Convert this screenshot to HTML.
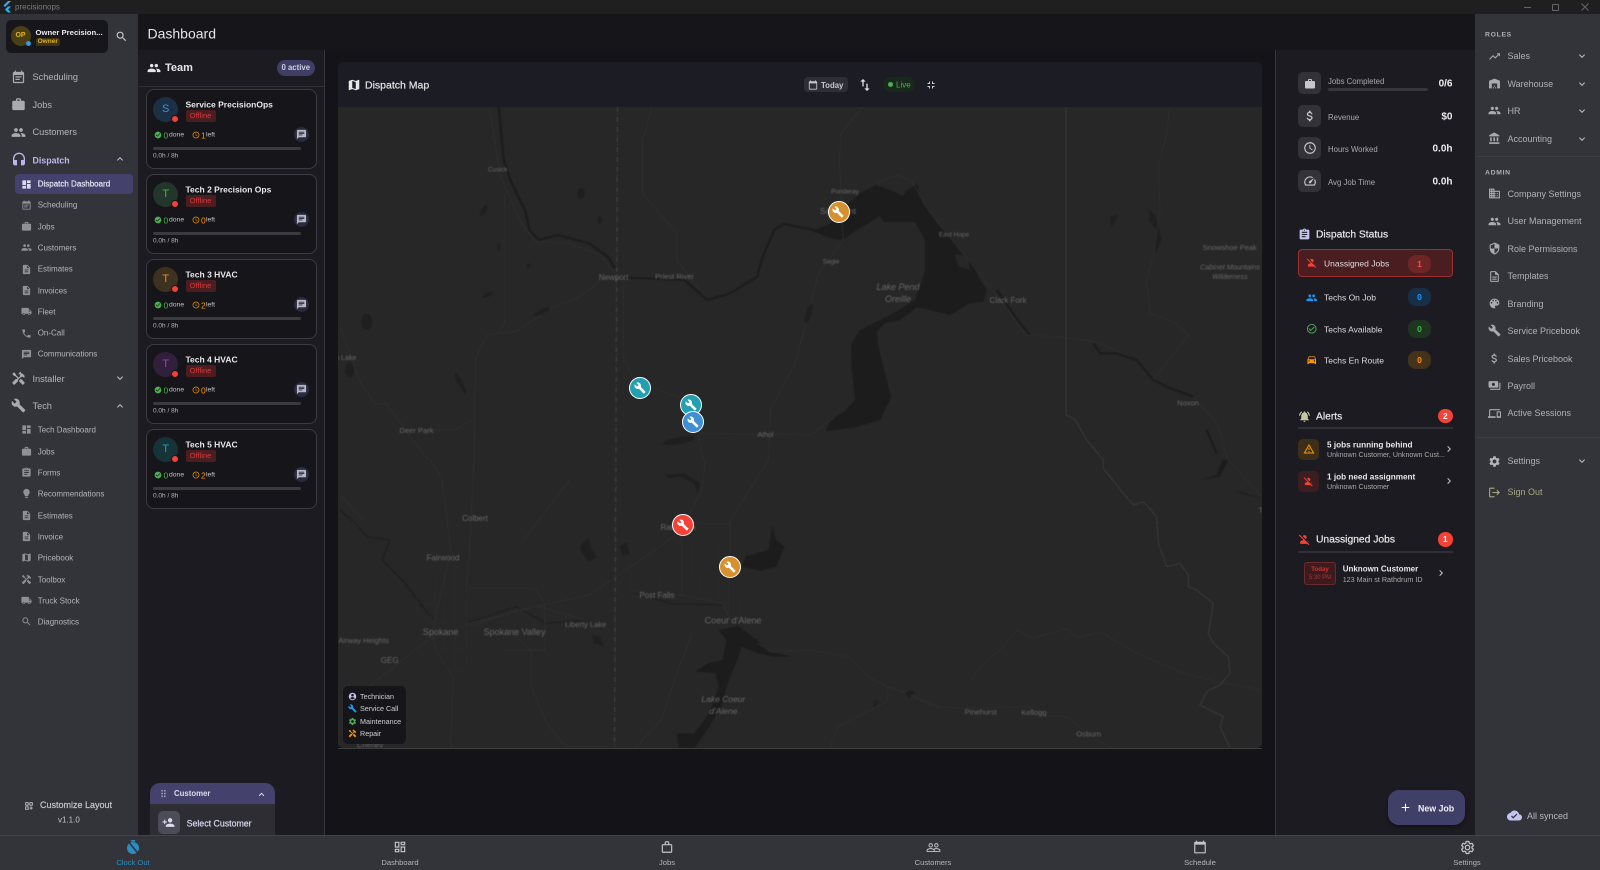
<!DOCTYPE html>
<html><head><meta charset="utf-8"><title>precisionops</title>
<style>
html,body{margin:0;padding:0;background:#131318}
body{width:1600px;height:870px;overflow:hidden;position:relative;font-family:"Liberation Sans",sans-serif;color:#ddd}
div,span.t{position:absolute}
.t{position:absolute;white-space:nowrap;transform:translateY(calc(-50% + .7px));line-height:1}
svg.i{position:absolute;fill:currentColor;display:block}
.s{font-size:9.2px;color:#b4b4ba}
.ss{font-size:8px;color:#b4b4ba}
.r{font-size:9px;color:#b0b0b6}
.nav{font-size:7.6px;color:#b4b4ba;transform:translate(-50%,-50%)}
.b{font-weight:bold}
.m{-webkit-text-stroke:.22px currentColor}
.card{width:171px;height:80px;left:145.5px;box-sizing:border-box;background:#15151a;border:1px solid #3b3b41;border-radius:8px}
.av{left:6.7px;top:7px;width:25px;height:25px;border-radius:50%;font-size:11px;text-align:center;line-height:25px}
.dot{left:24.5px;top:25.3px;width:6px;height:6px;border-radius:50%;background:#f44336;border:1px solid #15151a}
.chip{left:39px;top:20px;width:30px;height:12.4px;background:#4a1d20;border-radius:2px;color:#d9383a;font-size:7.6px;text-align:center;line-height:12.4px}
.bar{left:6.5px;top:57px;width:148px;height:3px;border-radius:2px;background:#3a3a40}
.cb{left:147.5px;top:37.5px;width:15px;height:15px;border-radius:50%;background:#2a2a42}
.pill{width:23px;height:18px;border-radius:8px;font-size:8.5px;font-weight:bold;text-align:center;line-height:18px;left:1408px}
.sq{left:1298px;width:22.7px;height:22px;border-radius:5px;background:#323238}
.badge{left:1438px;width:14.5px;height:14.5px;border-radius:50%;background:#f44336;color:#fff;font-size:8.5px;font-weight:bold;text-align:center;line-height:14.5px}
svg text{font-family:"Liberation Sans",sans-serif;fill:#686868;text-anchor:middle;font-size:7.6px}
.mapsvg{filter:blur(.45px)}
</style></head><body>
<svg width="0" height="0" style="position:absolute"><defs>
<symbol id="event" viewBox="0 0 24 24"><path d="M19 3h-1V1h-2v2H8V1H6v2H5c-1.11 0-1.99.9-1.99 2L3 19c0 1.1.89 2 2 2h14c1.1 0 2-.9 2-2V5c0-1.1-.9-2-2-2zm0 16H5V8h14v11zM7 10h10v2H7zm0 4h7v2H7z"/></symbol>
<symbol id="work" viewBox="0 0 24 24"><path d="M20 6h-4V4c0-1.11-.89-2-2-2h-4c-1.11 0-2 .89-2 2v2H4c-1.11 0-1.99.89-1.99 2L2 19c0 1.11.89 2 2 2h16c1.11 0 2-.89 2-2V8c0-1.11-.89-2-2-2zm-6 0h-4V4h4v2z"/></symbol>
<symbol id="people" viewBox="0 0 24 24"><path d="M16 11c1.66 0 2.99-1.34 2.99-3S17.66 5 16 5c-1.66 0-3 1.34-3 3s1.34 3 3 3zm-8 0c1.66 0 2.99-1.34 2.99-3S9.66 5 8 5C6.34 5 5 6.34 5 8s1.34 3 3 3zm0 2c-2.33 0-7 1.17-7 3.5V19h14v-2.5c0-2.33-4.67-3.5-7-3.5zm8 0c-.29 0-.62.02-.97.05 1.16.84 1.97 1.97 1.97 3.45V19h6v-2.5c0-2.33-4.67-3.5-7-3.5z"/></symbol>
<symbol id="headset" viewBox="0 0 24 24"><path d="M12 1c-4.97 0-9 4.03-9 9v7c0 1.66 1.34 3 3 3h3v-8H5v-2c0-3.87 3.13-7 7-7s7 3.13 7 7v2h-4v8h3c1.66 0 3-1.34 3-3v-7c0-4.97-4.03-9-9-9z"/></symbol>
<symbol id="dash" viewBox="0 0 24 24"><path d="M3 13h8V3H3v10zm0 8h8v-6H3v6zm10 0h8V11h-8v10zm0-18v6h8V3h-8z"/></symbol>
<symbol id="doc" viewBox="0 0 24 24"><path d="M14 2H6c-1.1 0-1.99.9-1.99 2L4 20c0 1.1.89 2 1.99 2H18c1.1 0 2-.9 2-2V8l-6-6zm2 16H8v-2h8v2zm0-4H8v-2h8v2zm-3-5V3.5L18.5 9H13z"/></symbol>
<symbol id="truck" viewBox="0 0 24 24"><path d="M20 8h-3V4H3c-1.1 0-2 .9-2 2v11h2c0 1.66 1.34 3 3 3s3-1.34 3-3h6c0 1.66 1.34 3 3 3s3-1.34 3-3h2v-5l-3-4zM6 18.5c-.83 0-1.5-.67-1.5-1.5s.67-1.5 1.5-1.5 1.5.67 1.5 1.5-.67 1.5-1.5 1.5zm13.5-9l1.96 2.5H17V9.5h2.5zm-1.5 9c-.83 0-1.5-.67-1.5-1.5s.67-1.5 1.5-1.5 1.5.67 1.5 1.5-.67 1.5-1.5 1.5z"/></symbol>
<symbol id="phone" viewBox="0 0 24 24"><path d="M6.62 10.79c1.44 2.83 3.76 5.14 6.59 6.59l2.2-2.2c.27-.27.67-.36 1.02-.24 1.12.37 2.33.57 3.57.57.55 0 1 .45 1 1V20c0 .55-.45 1-1 1-9.39 0-17-7.61-17-17 0-.55.45-1 1-1h3.5c.55 0 1 .45 1 1 0 1.25.2 2.45.57 3.57.11.35.03.74-.25 1.02l-2.2 2.2z"/></symbol>
<symbol id="chat" viewBox="0 0 24 24"><path d="M20 2H4c-1.1 0-1.99.9-1.99 2L2 22l4-4h14c1.1 0 2-.9 2-2V4c0-1.1-.9-2-2-2zM6 9h12v2H6V9zm8 5H6v-2h8v2zm4-6H6V6h12v2z"/></symbol>
<symbol id="build" viewBox="0 0 24 24"><path d="M22.7 19l-9.1-9.1c.9-2.3.4-5-1.5-6.9-2-2-5-2.4-7.4-1.3L9 6 6 9 1.6 4.7C.4 7.1.9 10.1 2.9 12.1c1.9 1.9 4.6 2.4 6.9 1.5l9.1 9.1c.4.4 1 .4 1.4 0l2.3-2.3c.5-.4.5-1.1.1-1.4z"/></symbol>
<symbol id="handy" viewBox="0 0 24 24"><path d="M21.67 18.17l-5.3-5.3h-.99l-2.54 2.54v.99l5.3 5.3c.39.39 1.02.39 1.41 0l2.12-2.12c.39-.38.39-1.02 0-1.41zM17.34 10.19l1.41-1.41 2.12 2.12c1.17-1.17 1.17-3.07 0-4.24l-3.54-3.54-1.41 1.41V1.71l-.7-.71-3.54 3.54.71.71h2.83l-1.41 1.41 1.06 1.06-2.89 2.89-4.13-4.13V5.06L4.83 2.04 2 4.87 5.03 7.9h1.41l4.13 4.13-.85.85H7.6l-5.3 5.3c-.39.39-.39 1.02 0 1.41l2.12 2.12c.39.39 1.02.39 1.41 0l5.3-5.3v-2.12l5.15-5.15 1.06 1.05z"/></symbol>
<symbol id="bulb" viewBox="0 0 24 24"><path d="M9 21c0 .55.45 1 1 1h4c.55 0 1-.45 1-1v-1H9v1zm3-19C8.14 2 5 5.14 5 9c0 2.38 1.19 4.47 3 5.74V17c0 .55.45 1 1 1h6c.55 0 1-.45 1-1v-2.26c1.81-1.27 3-3.36 3-5.74 0-3.86-3.14-7-7-7z"/></symbol>
<symbol id="search" viewBox="0 0 24 24"><path d="M15.5 14h-.79l-.28-.27C15.41 12.59 16 11.11 16 9.5 16 5.91 13.09 3 9.5 3S3 5.91 3 9.5 5.91 16 9.5 16c1.61 0 3.09-.59 4.23-1.57l.27.28v.79l5 4.99L20.49 19l-4.99-5zm-6 0C7.01 14 5 11.99 5 9.5S7.01 5 9.5 5 14 7.01 14 9.5 11.99 14 9.5 14z"/></symbol>
<symbol id="more" viewBox="0 0 24 24"><path d="M16.59 8.59L12 13.17 7.41 8.59 6 10l6 6 6-6z"/></symbol>
<symbol id="less" viewBox="0 0 24 24"><path d="M12 8l-6 6 1.41 1.41L12 10.83l4.59 4.58L18 14z"/></symbol>
<symbol id="right" viewBox="0 0 24 24"><path d="M10 6L8.59 7.41 13.17 12l-4.58 4.59L10 18l6-6z"/></symbol>
<symbol id="check" viewBox="0 0 24 24"><path d="M12 2C6.48 2 2 6.48 2 12s4.48 10 10 10 10-4.48 10-10S17.52 2 12 2zm-2 15l-5-5 1.41-1.41L10 14.17l7.59-7.59L19 8l-9 9z"/></symbol>
<symbol id="checko" viewBox="0 0 24 24"><path d="M16.59 7.58L10 14.17l-3.59-3.58L5 12l5 5 8-8zM12 2C6.48 2 2 6.48 2 12s4.48 10 10 10 10-4.48 10-10S17.52 2 12 2zm0 18c-4.42 0-8-3.58-8-8s3.58-8 8-8 8 3.58 8 8-3.58 8-8 8z"/></symbol>
<symbol id="clock" viewBox="0 0 24 24"><path d="M11.99 2C6.47 2 2 6.48 2 12s4.47 10 9.99 10C17.52 22 22 17.52 22 12S17.52 2 11.99 2zM12 20c-4.42 0-8-3.58-8-8s3.58-8 8-8 8 3.58 8 8-3.58 8-8 8zm.5-13H11v6l5.25 3.15.75-1.23-4.5-2.67z"/></symbol>
<symbol id="map" viewBox="0 0 24 24"><path d="M20.5 3l-.16.03L15 5.1 9 3 3.36 4.9c-.21.07-.36.25-.36.48V20.5c0 .28.22.5.5.5l.16-.03L9 18.9l6 2.1 5.64-1.9c.21-.07.36-.25.36-.48V3.5c0-.28-.22-.5-.5-.5zM15 19l-6-2.11V5l6 2.11V19z"/></symbol>
<symbol id="swap" viewBox="0 0 24 24"><path d="M16 17.01V10h-2v7.01h-3L15 21l4-3.99h-3zM9 3L5 6.99h3V14h2V6.99h3L9 3z"/></symbol>
<symbol id="fsx" viewBox="0 0 24 24"><path d="M5 16h3v3h2v-5H5v2zm3-8H5v2h5V5H8v3zm6 11h2v-3h3v-2h-5v5zm2-11V5h-2v5h5V8h-3z"/></symbol>
<symbol id="cal" viewBox="0 0 24 24"><path d="M20 3h-1V1h-2v2H7V1H5v2H4c-1.1 0-2 .9-2 2v16c0 1.1.9 2 2 2h16c1.1 0 2-.9 2-2V5c0-1.1-.9-2-2-2zm0 18H4V8h16v13z"/></symbol>
<symbol id="money" viewBox="0 0 24 24"><path d="M11.8 10.9c-2.27-.59-3-1.2-3-2.15 0-1.09 1.01-1.85 2.7-1.85 1.78 0 2.44.85 2.5 2.1h2.21c-.07-1.72-1.12-3.3-3.21-3.81V3h-3v2.16c-1.94.42-3.5 1.68-3.5 3.61 0 2.31 1.91 3.46 4.7 4.13 2.5.6 3 1.48 3 2.41 0 .69-.49 1.79-2.7 1.79-2.06 0-2.87-.92-2.98-2.1h-2.2c.12 2.19 1.76 3.42 3.68 3.83V21h3v-2.15c1.95-.37 3.5-1.5 3.5-3.55 0-2.84-2.43-3.81-4.7-4.4z"/></symbol>
<symbol id="speed" viewBox="0 0 24 24"><path d="M20.38 8.57l-1.23 1.85a8 8 0 0 1-.22 7.58H5.07A8 8 0 0 1 15.58 6.85l1.85-1.23A10 10 0 0 0 3.35 19a2 2 0 0 0 1.72 1h13.85a2 2 0 0 0 1.74-1 10 10 0 0 0-.27-10.44zM10.59 15.41a2 2 0 0 0 2.83 0l5.66-8.49-8.49 5.66a2 2 0 0 0 0 2.83z"/></symbol>
<symbol id="assign" viewBox="0 0 24 24"><path d="M19 3h-4.18C14.4 1.84 13.3 1 12 1c-1.3 0-2.4.84-2.82 2H5c-1.1 0-2 .9-2 2v14c0 1.1.9 2 2 2h14c1.1 0 2-.9 2-2V5c0-1.1-.9-2-2-2zm-7 0c.55 0 1 .45 1 1s-.45 1-1 1-1-.45-1-1 .45-1 1-1zm2 14H7v-2h7v2zm3-4H7v-2h10v2zm0-4H7V7h10v2z"/></symbol>
<symbol id="poff" viewBox="0 0 24 24"><path d="M8.65 5.82C9.36 4.72 10.6 4 12 4c2.21 0 4 1.79 4 4 0 1.4-.72 2.64-1.82 3.35L8.65 5.82zM20 17.17c-.02-1.1-.63-2.11-1.61-2.62-.54-.28-1.13-.54-1.77-.76L20 17.17zm1.19 4.02L2.81 2.81 1.39 4.22l8.89 8.89c-1.81.23-3.39.79-4.67 1.45C4.61 15.07 4 16.1 4 17.22V20h13.17l2.61 2.61 1.41-1.42z"/></symbol>
<symbol id="warn" viewBox="0 0 24 24"><path d="M12 5.99L19.53 19H4.47L12 5.99M12 2L1 21h22L12 2zm1 14h-2v2h2v-2zm0-6h-2v4h2v-4z"/></symbol>
<symbol id="bell" viewBox="0 0 24 24"><path d="M7.58 4.08L6.15 2.65C3.75 4.48 2.17 7.3 2.03 10.5h2c.15-2.65 1.51-4.97 3.55-6.42zm12.39 6.42h2c-.15-3.2-1.73-6.02-4.12-7.85l-1.42 1.43c2.02 1.45 3.39 3.77 3.54 6.42zM18 11c0-3.07-1.64-5.64-4.5-6.32V4c0-.83-.67-1.5-1.5-1.5s-1.5.67-1.5 1.5v.68C7.63 5.36 6 7.92 6 11v5l-2 2v1h16v-1l-2-2v-5zm-6 11c.14 0 .27-.01.4-.04.65-.14 1.18-.58 1.44-1.18.1-.24.15-.5.15-.78h-4c.01 1.1.9 2 2.01 2z"/></symbol>
<symbol id="car" viewBox="0 0 24 24"><path d="M18.92 6.01C18.72 5.42 18.16 5 17.5 5h-11c-.66 0-1.21.42-1.42 1.01L3 12v8c0 .55.45 1 1 1h1c.55 0 1-.45 1-1v-1h12v1c0 .55.45 1 1 1h1c.55 0 1-.45 1-1v-8l-2.08-5.99zM6.5 16c-.83 0-1.5-.67-1.5-1.5S5.67 13 6.5 13s1.5.67 1.5 1.5S7.33 16 6.5 16zm11 0c-.83 0-1.5-.67-1.5-1.5s.67-1.5 1.5-1.5 1.5.67 1.5 1.5-.67 1.5-1.5 1.5zM5 11l1.5-4.5h11L19 11H5z"/></symbol>
<symbol id="trend" viewBox="0 0 24 24"><path d="M16 6l2.29 2.29-4.88 4.88-4-4L2 16.59 3.41 18l6-6 4 4 6.3-6.29L22 12V6z"/></symbol>
<symbol id="ware" viewBox="0 0 24 24"><path d="M22 21V7L12 3 2 7v14h5v-9h10v9h5zm-11-2H9v2h2v-2zm2-3h-2v2h2v-2zm2 3h-2v2h2v-2z"/></symbol>
<symbol id="bank" viewBox="0 0 24 24"><path d="M4 10v7h3v-7H4zm6 0v7h3v-7h-3zM2 22h19v-3H2v3zm14-12v7h3v-7h-3zm-4.5-9L2 6v2h19V6l-9.5-5z"/></symbol>
<symbol id="biz" viewBox="0 0 24 24"><path d="M12 7V3H2v18h20V7H12zM6 19H4v-2h2v2zm0-4H4v-2h2v2zm0-4H4V9h2v2zm0-4H4V5h2v2zm4 12H8v-2h2v2zm0-4H8v-2h2v2zm0-4H8V9h2v2zm0-4H8V5h2v2zm10 12h-8v-2h2v-2h-2v-2h2v-2h-2V9h8v10zm-2-8h-2v2h2v-2zm0 4h-2v2h2v-2z"/></symbol>
<symbol id="shield" viewBox="0 0 24 24"><path d="M12 1L3 5v6c0 5.55 3.84 10.74 9 12 5.16-1.26 9-6.45 9-12V5l-9-4zm0 10.99h7c-.53 4.12-3.28 7.79-7 8.94V12H5V6.3l7-3.11v8.8z"/></symbol>
<symbol id="doco" viewBox="0 0 24 24"><path d="M8 16h8v2H8zm0-4h8v2H8zm6-10H6c-1.1 0-2 .9-2 2v16c0 1.1.89 2 1.99 2H18c1.1 0 2-.9 2-2V8l-6-6zm4 18H6V4h7v5h5v11z"/></symbol>
<symbol id="pal" viewBox="0 0 24 24"><path d="M12 3c-4.97 0-9 4.03-9 9s4.03 9 9 9c.83 0 1.5-.67 1.5-1.5 0-.39-.15-.74-.39-1.01-.23-.26-.38-.61-.38-.99 0-.83.67-1.5 1.5-1.5H16c2.76 0 5-2.24 5-5 0-4.42-4.03-8-9-8zm-5.5 9c-.83 0-1.5-.67-1.5-1.5S5.67 9 6.5 9 8 9.67 8 10.5 7.33 12 6.5 12zm3-4C8.67 8 8 7.33 8 6.5S8.67 5 9.5 5s1.5.67 1.5 1.5S10.33 8 9.5 8zm5 0c-.83 0-1.5-.67-1.5-1.5S13.67 5 14.5 5s1.5.67 1.5 1.5S15.33 8 14.5 8zm3 4c-.83 0-1.5-.67-1.5-1.5S16.67 9 17.5 9s1.5.67 1.5 1.5-.67 1.5-1.5 1.5z"/></symbol>
<symbol id="pay" viewBox="0 0 24 24"><path d="M19 14V6c0-1.1-.9-2-2-2H3c-1.1 0-2 .9-2 2v8c0 1.1.9 2 2 2h14c1.1 0 2-.9 2-2zm-9-1c-1.66 0-3-1.34-3-3s1.34-3 3-3 3 1.34 3 3-1.34 3-3 3zm13-6v11c0 1.1-.9 2-2 2H4v-2h17V7h2z"/></symbol>
<symbol id="dev" viewBox="0 0 24 24"><path d="M4 6h18V4H4c-1.1 0-2 .9-2 2v11H0v3h14v-3H4V6zm19 2h-6c-.55 0-1 .45-1 1v10c0 .55.45 1 1 1h6c.55 0 1-.45 1-1V9c0-.55-.45-1-1-1zm-1 9h-4v-7h4v7z"/></symbol>
<symbol id="gear" viewBox="0 0 24 24"><path d="M19.14 12.94c.04-.3.06-.61.06-.94 0-.32-.02-.64-.07-.94l2.03-1.58c.18-.14.23-.41.12-.61l-1.92-3.32c-.12-.22-.37-.29-.59-.22l-2.39.96c-.5-.38-1.03-.7-1.62-.94l-.36-2.54c-.04-.24-.24-.41-.48-.41h-3.84c-.24 0-.43.17-.47.41l-.36 2.54c-.59.24-1.13.57-1.62.94l-2.39-.96c-.22-.08-.47 0-.59.22L2.74 8.87c-.12.21-.08.47.12.61l2.03 1.58c-.05.3-.09.63-.09.94s.02.64.07.94l-2.03 1.58c-.18.14-.23.41-.12.61l1.92 3.32c.12.22.37.29.59.22l2.39-.96c.5.38 1.03.7 1.62.94l.36 2.54c.05.24.24.41.48.41h3.84c.24 0 .44-.17.47-.41l.36-2.54c.59-.24 1.13-.56 1.62-.94l2.39.96c.22.08.47 0 .59-.22l1.92-3.32c.12-.22.07-.47-.12-.61l-2.01-1.58zM12 15.6c-1.98 0-3.6-1.62-3.6-3.6s1.62-3.6 3.6-3.6 3.6 1.62 3.6 3.6-1.62 3.6-3.6 3.6z"/></symbol>
<symbol id="out" viewBox="0 0 24 24"><path d="M17 7l-1.41 1.41L18.17 11H8v2h10.17l-2.58 2.58L17 17l5-5zM4 5h8V3H4c-1.1 0-2 .9-2 2v14c0 1.1.9 2 2 2h8v-2H4V5z"/></symbol>
<symbol id="add" viewBox="0 0 24 24"><path d="M19 13h-6v6h-2v-6H5v-2h6V5h2v6h6v2z"/></symbol>
<symbol id="cloud" viewBox="0 0 24 24"><path d="M19.35 10.04C18.67 6.59 15.64 4 12 4 9.11 4 6.6 5.64 5.35 8.04 2.34 8.36 0 10.91 0 14c0 3.31 2.69 6 6 6h13c2.76 0 5-2.24 5-5 0-2.64-2.05-4.78-4.65-4.96zM10 17l-3.5-3.5 1.41-1.41L10 14.17 15.18 9l1.41 1.41L10 17z"/></symbol>
<symbol id="padd" viewBox="0 0 24 24"><path d="M15 12c2.21 0 4-1.79 4-4s-1.79-4-4-4-4 1.79-4 4 1.79 4 4 4zm-9-2V7H4v3H1v2h3v3h2v-3h3v-2H6zm9 4c-2.67 0-8 1.34-8 4v2h16v-2c0-2.66-5.33-4-8-4z"/></symbol>
<symbol id="drag" viewBox="0 0 24 24"><path d="M11 18c0 1.1-.9 2-2 2s-2-.9-2-2 .9-2 2-2 2 .9 2 2zm-2-8c-1.1 0-2 .9-2 2s.9 2 2 2 2-.9 2-2-.9-2-2-2zm0-6c-1.1 0-2 .9-2 2s.9 2 2 2 2-.9 2-2-.9-2-2-2zm6 4c1.1 0 2-.9 2-2s-.9-2-2-2-2 .9-2 2 .9 2 2 2zm0 2c-1.1 0-2 .9-2 2s.9 2 2 2 2-.9 2-2-.9-2-2-2zm0 6c-1.1 0-2 .9-2 2s.9 2 2 2 2-.9 2-2-.9-2-2-2z"/></symbol>
<symbol id="cust" viewBox="0 0 24 24"><path d="M3 3h8v8H3zm2 2v4h4V5zm8-2h8v8h-8zm2 2v4h4V5zM3 13h8v8H3zm2 2v4h4v-4zm13-2h-2v3h-3v2h3v3h2v-3h3v-2h-3z"/></symbol>
<symbol id="dasho" viewBox="0 0 24 24"><path d="M19 5v2h-4V5h4M9 5v6H5V5h4m10 8v6h-4v-6h4M9 17v2H5v-2h4M21 3h-8v6h8V3zM11 3H3v10h8V3zm10 8h-8v10h8V11zm-10 4H3v6h8v-6z"/></symbol>
<symbol id="bag" viewBox="0 0 24 24"><path d="M19 7h-3V5c0-1.7-1.3-3-3-3h-2C9.300 2 8 3.300 8 5v2H5c-1.100 0-2 .9-2 2v11c0 1.100.9 2 2 2h14c1.100 0 2-.9 2-2V9c0-1.100-.9-2-2-2zM10 5c0-.6.4-1 1-1h2c.6 0 1 .4 1 1v2h-4V5zm9 15H5V9h14v11z"/></symbol>
<symbol id="pplo" viewBox="0 0 24 24"><path d="M16.500 13c-1.200 0-3.070.34-4.500 1-1.430-.67-3.300-1-4.500-1C5.330 13 1 14.080 1 16.250V19h22v-2.750c0-2.170-4.330-3.250-6.500-3.250zm-4 4.500h-10v-1.250c0-.54 2.560-1.750 5-1.750s5 1.210 5 1.750v1.250zm9 0H14v-1.250c0-.46-.2-.86-.52-1.220.88-.3 1.960-.53 3.020-.53 2.440 0 5 1.210 5 1.750v1.250zM7.500 12c1.930 0 3.500-1.570 3.500-3.500S9.430 5 7.500 5 4 6.570 4 8.500 5.570 12 7.500 12zm0-5.500c1.100 0 2 .9 2 2s-.9 2-2 2-2-.9-2-2 .9-2 2-2zm9 5.500c1.930 0 3.500-1.570 3.500-3.500S18.430 5 16.500 5 13 6.570 13 8.500s1.570 3.500 3.500 3.500zm0-5.500c1.100 0 2 .9 2 2s-.9 2-2 2-2-.9-2-2 .9-2 2-2z"/></symbol>
<symbol id="acct" viewBox="0 0 24 24"><path d="M12 2a10 10 0 100 20 10 10 0 000-20zm0 3a3.500 3.500 0 110 7 3.500 3.500 0 010-7zm0 14.500c-2.600 0-4.900-1.300-6.200-3.300 1.100-1.700 4-2.700 6.200-2.700s5.100 1 6.200 2.700c-1.300 2-3.600 3.300-6.200 3.300z"/></symbol>
</defs></svg>

<!-- Title bar -->
<div style="left:0;top:0;width:1600px;height:14px;background:#1f1f1f"></div>
<svg style="position:absolute;left:2px;top:1px" width="9" height="12" viewBox="0 0 9 12"><path d="M6 0h3L3 6 1.500 4.500z" fill="#42a5f5"/><path d="M6 5.500h3L6 8.500l3 3H6L3 8.500z" fill="#29b6f6"/></svg>
<span class="t" style="left:15px;top:7px;font-size:8px;color:#7a7a7a">precisionops</span>
<div style="left:1524px;top:7px;width:7px;height:1px;background:#666"></div>
<div style="left:1552px;top:3.500px;width:5px;height:5px;border:1px solid #666;border-radius:1px"></div>
<svg style="position:absolute;left:1581px;top:3px" width="8" height="8"><path d="M.5.5l7 7m0-7l-7 7" stroke="#666" fill="none"/></svg>

<!-- Base regions -->
<div style="left:138px;top:14px;width:1337px;height:36px;background:#15151a"></div>
<div style="left:138px;top:50px;width:186px;height:785px;background:#1b1b21"></div>
<div style="left:324px;top:50px;width:1px;height:785px;background:#36363b"></div>
<div style="left:1275px;top:50px;width:200px;height:785px;background:#1b1b21;border-left:1px solid #36363b;box-sizing:border-box"></div>
<div style="left:0;top:14px;width:138px;height:821px;background:#33333a"></div>
<div style="left:1475px;top:14px;width:125px;height:821px;background:#33333a"></div>
<div style="left:138px;top:85.500px;width:186px;height:1.500px;background:#2e2e34"></div>
<span class="t" style="left:147.500px;top:32.500px;font-size:14px;color:#e6e6e8">Dashboard</span>

<!-- Left sidebar -->
<div style="left:5.500px;top:20px;width:102px;height:33px;background:#16161b;border-radius:5px"></div>
<div style="left:10.500px;top:26px;width:20px;height:20px;background:#4a3e16;border-radius:50%;color:#e2b21f;font-size:7px;font-weight:bold;text-align:center;line-height:20px">OP</div>
<div style="left:25.500px;top:41px;width:5px;height:5px;border-radius:50%;background:#3a9ad9"></div>
<span class="t b" style="left:35.500px;top:32px;font-size:7.700px;color:#e8e8ea">Owner Precision...</span>
<div style="left:35.500px;top:37.500px;width:24.500px;height:8px;border-radius:2px;background:#3c3314;color:#e2b21f;font-size:6.500px;text-align:center;line-height:8px;font-weight:bold">Owner</div>
<svg class="i" style="left:114.500px;top:29.500px;width:13px;height:13px;color:#ccc"><use href="#search"/></svg>

<svg class="i" style="left:11px;top:69.500px;width:15px;height:15px;color:#aaaab0"><use href="#event"/></svg><span class="t s" style="left:32.500px;top:77px">Scheduling</span>
<svg class="i" style="left:11px;top:97px;width:15px;height:15px;color:#aaaab0"><use href="#work"/></svg><span class="t s" style="left:32.500px;top:105px">Jobs</span>
<svg class="i" style="left:11px;top:124.500px;width:15px;height:15px;color:#aaaab0"><use href="#people"/></svg><span class="t s" style="left:32.500px;top:132px">Customers</span>
<svg class="i" style="left:10.500px;top:151.500px;width:16px;height:16px;color:#b9b8ee"><use href="#headset"/></svg><span class="t s b" style="left:32.500px;top:160px;color:#b9b8ee;font-size:8.800px">Dispatch</span>
<svg class="i" style="left:113.500px;top:153px;width:12px;height:12px;color:#c8c8cc"><use href="#less"/></svg>
<div style="left:15px;top:174px;width:118px;height:20px;background:#44426c;border-radius:4px"></div>
<svg class="i" style="left:20.500px;top:178.500px;width:11px;height:11px;color:#dcdcf0"><use href="#dash"/></svg><span class="t ss m" style="left:37.700px;top:184px;color:#e2e2f0">Dispatch Dashboard</span>
<svg class="i" style="left:20.500px;top:199.500px;width:11px;height:11px;color:#909096"><use href="#event"/></svg><span class="t ss" style="left:37.700px;top:205.300px">Scheduling</span>
<svg class="i" style="left:20.500px;top:221px;width:11px;height:11px;color:#909096"><use href="#work"/></svg><span class="t ss" style="left:37.700px;top:226.700px">Jobs</span>
<svg class="i" style="left:20.500px;top:242px;width:11px;height:11px;color:#909096"><use href="#people"/></svg><span class="t ss" style="left:37.700px;top:248px">Customers</span>
<svg class="i" style="left:20.500px;top:263.500px;width:11px;height:11px;color:#909096"><use href="#doc"/></svg><span class="t ss" style="left:37.700px;top:269.300px">Estimates</span>
<svg class="i" style="left:20.500px;top:285px;width:11px;height:11px;color:#909096"><use href="#doc"/></svg><span class="t ss" style="left:37.700px;top:290.700px">Invoices</span>
<svg class="i" style="left:20.500px;top:306px;width:11px;height:11px;color:#909096"><use href="#truck"/></svg><span class="t ss" style="left:37.700px;top:312px">Fleet</span>
<svg class="i" style="left:20.500px;top:327.500px;width:11px;height:11px;color:#909096"><use href="#phone"/></svg><span class="t ss" style="left:37.700px;top:333.300px">On-Call</span>
<svg class="i" style="left:20.500px;top:348.500px;width:11px;height:11px;color:#909096"><use href="#chat"/></svg><span class="t ss" style="left:37.700px;top:354.300px">Communications</span>
<svg class="i" style="left:11px;top:371px;width:15px;height:15px;color:#aaaab0"><use href="#handy"/></svg><span class="t s" style="left:32.500px;top:378.500px">Installer</span>
<svg class="i" style="left:113.500px;top:372px;width:12px;height:12px;color:#c8c8cc"><use href="#more"/></svg>
<svg class="i" style="left:11px;top:398px;width:15px;height:15px;color:#aaaab0"><use href="#build"/></svg><span class="t s" style="left:32.500px;top:406px">Tech</span>
<svg class="i" style="left:113.500px;top:399.500px;width:12px;height:12px;color:#c8c8cc"><use href="#less"/></svg>
<svg class="i" style="left:20.500px;top:424px;width:11px;height:11px;color:#909096"><use href="#dash"/></svg><span class="t ss" style="left:37.700px;top:430px">Tech Dashboard</span>
<svg class="i" style="left:20.500px;top:445.500px;width:11px;height:11px;color:#909096"><use href="#work"/></svg><span class="t ss" style="left:37.700px;top:451.500px">Jobs</span>
<svg class="i" style="left:20.500px;top:467px;width:11px;height:11px;color:#909096"><use href="#assign"/></svg><span class="t ss" style="left:37.700px;top:473px">Forms</span>
<svg class="i" style="left:20.500px;top:488px;width:11px;height:11px;color:#909096"><use href="#bulb"/></svg><span class="t ss" style="left:37.700px;top:494.300px">Recommendations</span>
<svg class="i" style="left:20.500px;top:509.500px;width:11px;height:11px;color:#909096"><use href="#doc"/></svg><span class="t ss" style="left:37.700px;top:515.500px">Estimates</span>
<svg class="i" style="left:20.500px;top:531px;width:11px;height:11px;color:#909096"><use href="#doc"/></svg><span class="t ss" style="left:37.700px;top:537px">Invoice</span>
<svg class="i" style="left:20.500px;top:552px;width:11px;height:11px;color:#909096"><use href="#map"/></svg><span class="t ss" style="left:37.700px;top:558px">Pricebook</span>
<svg class="i" style="left:20.500px;top:573.500px;width:11px;height:11px;color:#909096"><use href="#handy"/></svg><span class="t ss" style="left:37.700px;top:579.500px">Toolbox</span>
<svg class="i" style="left:20.500px;top:595px;width:11px;height:11px;color:#909096"><use href="#truck"/></svg><span class="t ss" style="left:37.700px;top:600.800px">Truck Stock</span>
<svg class="i" style="left:20.500px;top:616px;width:11px;height:11px;color:#909096"><use href="#search"/></svg><span class="t ss" style="left:37.700px;top:622px">Diagnostics</span>
<svg class="i" style="left:24px;top:800.500px;width:10px;height:10px;color:#c8c8cc"><use href="#cust"/></svg><span class="t m" style="left:40px;top:805.300px;font-size:9px;color:#c4c4c8">Customize Layout</span>
<span class="t" style="left:58px;top:820px;font-size:8px;color:#c4c4c8">v1.1.0</span>

<!-- Team -->
<svg class="i" style="left:147px;top:61px;width:14px;height:14px;color:#e6e6e8"><use href="#people"/></svg>
<span class="t b" style="left:165px;top:68px;font-size:11px;color:#e6e6e8">Team</span>
<div style="left:277px;top:60px;width:37.500px;height:15.500px;border-radius:8px;background:#3f3e66;color:#cfcfe0;font-size:7.800px;font-weight:bold;text-align:center;line-height:15.500px">0 active</div>

<div class="card" style="top:88.700px">
<div class="av" style="background:#1c3045;color:#3f8fd5">S</div><div class="dot"></div>
<span class="t b" style="left:39px;top:14px;font-size:8.500px;color:#e8e8ea">Service PrecisionOps</span>
<div class="chip">Offline</div>
<svg class="i" style="left:7px;top:41px;width:8px;height:8px;color:#4caf50"><use href="#check"/></svg><span class="t" style="left:17px;top:45.200px;font-size:8.500px;color:#4caf50">0</span><span class="t" style="left:22.500px;top:45.700px;font-size:6.800px;color:#c4c4c8">done</span>
<svg class="i" style="left:45px;top:41px;width:8px;height:8px;color:#ff9800"><use href="#clock"/></svg><span class="t" style="left:54.500px;top:45.200px;font-size:8.500px;color:#ff9800">1</span><span class="t" style="left:59.500px;top:45.700px;font-size:6.800px;color:#c4c4c8">left</span>
<div class="cb"></div><svg class="i" style="left:149.500px;top:39.500px;width:11px;height:11px;color:#b8b8c0"><use href="#chat"/></svg>
<div class="bar"></div><span class="t" style="left:6.500px;top:66.500px;font-size:6.500px;color:#b8b8bc">0.0h / 8h</span>
</div>
<div class="card" style="top:173.700px">
<div class="av" style="background:#22362a;color:#4caf50">T</div><div class="dot"></div>
<span class="t b" style="left:39px;top:14px;font-size:8.500px;color:#e8e8ea">Tech 2 Precision Ops</span>
<div class="chip">Offline</div>
<svg class="i" style="left:7px;top:41px;width:8px;height:8px;color:#4caf50"><use href="#check"/></svg><span class="t" style="left:17px;top:45.200px;font-size:8.500px;color:#4caf50">0</span><span class="t" style="left:22.500px;top:45.700px;font-size:6.800px;color:#c4c4c8">done</span>
<svg class="i" style="left:45px;top:41px;width:8px;height:8px;color:#ff9800"><use href="#clock"/></svg><span class="t" style="left:54.500px;top:45.200px;font-size:8.500px;color:#ff9800">0</span><span class="t" style="left:59.500px;top:45.700px;font-size:6.800px;color:#c4c4c8">left</span>
<div class="cb"></div><svg class="i" style="left:149.500px;top:39.500px;width:11px;height:11px;color:#b8b8c0"><use href="#chat"/></svg>
<div class="bar"></div><span class="t" style="left:6.500px;top:66.500px;font-size:6.500px;color:#b8b8bc">0.0h / 8h</span>
</div>
<div class="card" style="top:258.700px">
<div class="av" style="background:#3f3120;color:#d6912e">T</div><div class="dot"></div>
<span class="t b" style="left:39px;top:14px;font-size:8.500px;color:#e8e8ea">Tech 3 HVAC</span>
<div class="chip">Offline</div>
<svg class="i" style="left:7px;top:41px;width:8px;height:8px;color:#4caf50"><use href="#check"/></svg><span class="t" style="left:17px;top:45.200px;font-size:8.500px;color:#4caf50">0</span><span class="t" style="left:22.500px;top:45.700px;font-size:6.800px;color:#c4c4c8">done</span>
<svg class="i" style="left:45px;top:41px;width:8px;height:8px;color:#ff9800"><use href="#clock"/></svg><span class="t" style="left:54.500px;top:45.200px;font-size:8.500px;color:#ff9800">2</span><span class="t" style="left:59.500px;top:45.700px;font-size:6.800px;color:#c4c4c8">left</span>
<div class="cb"></div><svg class="i" style="left:149.500px;top:39.500px;width:11px;height:11px;color:#b8b8c0"><use href="#chat"/></svg>
<div class="bar"></div><span class="t" style="left:6.500px;top:66.500px;font-size:6.500px;color:#b8b8bc">0.0h / 8h</span>
</div>
<div class="card" style="top:343.700px">
<div class="av" style="background:#311f3b;color:#9c3fb0">T</div><div class="dot"></div>
<span class="t b" style="left:39px;top:14px;font-size:8.500px;color:#e8e8ea">Tech 4 HVAC</span>
<div class="chip">Offline</div>
<svg class="i" style="left:7px;top:41px;width:8px;height:8px;color:#4caf50"><use href="#check"/></svg><span class="t" style="left:17px;top:45.200px;font-size:8.500px;color:#4caf50">0</span><span class="t" style="left:22.500px;top:45.700px;font-size:6.800px;color:#c4c4c8">done</span>
<svg class="i" style="left:45px;top:41px;width:8px;height:8px;color:#ff9800"><use href="#clock"/></svg><span class="t" style="left:54.500px;top:45.200px;font-size:8.500px;color:#ff9800">0</span><span class="t" style="left:59.500px;top:45.700px;font-size:6.800px;color:#c4c4c8">left</span>
<div class="cb"></div><svg class="i" style="left:149.500px;top:39.500px;width:11px;height:11px;color:#b8b8c0"><use href="#chat"/></svg>
<div class="bar"></div><span class="t" style="left:6.500px;top:66.500px;font-size:6.500px;color:#b8b8bc">0.0h / 8h</span>
</div>
<div class="card" style="top:428.700px">
<div class="av" style="background:#163338;color:#22a0b2">T</div><div class="dot"></div>
<span class="t b" style="left:39px;top:14px;font-size:8.500px;color:#e8e8ea">Tech 5 HVAC</span>
<div class="chip">Offline</div>
<svg class="i" style="left:7px;top:41px;width:8px;height:8px;color:#4caf50"><use href="#check"/></svg><span class="t" style="left:17px;top:45.200px;font-size:8.500px;color:#4caf50">0</span><span class="t" style="left:22.500px;top:45.700px;font-size:6.800px;color:#c4c4c8">done</span>
<svg class="i" style="left:45px;top:41px;width:8px;height:8px;color:#ff9800"><use href="#clock"/></svg><span class="t" style="left:54.500px;top:45.200px;font-size:8.500px;color:#ff9800">2</span><span class="t" style="left:59.500px;top:45.700px;font-size:6.800px;color:#c4c4c8">left</span>
<div class="cb"></div><svg class="i" style="left:149.500px;top:39.500px;width:11px;height:11px;color:#b8b8c0"><use href="#chat"/></svg>
<div class="bar"></div><span class="t" style="left:6.500px;top:66.500px;font-size:6.500px;color:#b8b8bc">0.0h / 8h</span>
</div>

<!-- Customer widget -->
<div style="left:150px;top:782.500px;width:124.500px;height:52.500px;background:#2d2d33;border-radius:10px 10px 0 0;overflow:hidden">
<div style="left:0;top:0;width:124.500px;height:21px;background:#44426c"></div></div>
<svg class="i" style="left:157.500px;top:788px;width:11px;height:11px;color:#9c9cb8"><use href="#drag"/></svg>
<span class="t b" style="left:174px;top:793.300px;font-size:7.800px;color:#dcdcec">Customer</span>
<svg class="i" style="left:256px;top:788.500px;width:11px;height:11px;color:#e0e0ea"><use href="#less"/></svg>
<div style="left:157.500px;top:811px;width:22.500px;height:23px;background:#4c4c58;border-radius:5px"></div>
<svg class="i" style="left:162px;top:816px;width:13px;height:13px;color:#dcdcf0"><use href="#padd"/></svg>
<span class="t m" style="left:186.600px;top:823px;font-size:8.800px;color:#d4d4ec">Select Customer</span>

<!-- Map -->
<div style="left:338px;top:62px;width:924px;height:45px;background:#1c1c24;border-radius:5px 5px 0 0"></div>
<div style="left:338px;top:107px;width:924px;height:641px;border-radius:0 0 5px 5px;overflow:hidden;background:#272727">
<svg class="mapsvg" width="924" height="641" viewBox="338 107 924 641" style="position:absolute;left:0;top:0">
<!-- Lake Pend Oreille (page coords) -->
<path fill="#1c1c1c" d="M812 231L830 224 840 210 849 203 862 192 876 185 890 190 903 196 907 190 917 184 923 203 937 223 957 247 972 263 980 280 987 290 983 302 970 303 950 315 930 310 917 307 900 320 885 323 877 331 878 345 891 397 880 420 852 428 826 431 830 421 845 411 855 400 852 370 851 345 860 330 890 315 915 300 925 272 925 240 915 222 884 222 880 216 860 228 842 240 830 238z"/>
<path fill="#272727" d="M955 254L968 257 970 270 958 266z"/>
<path fill="none" stroke="#303030" stroke-width=".8" d="M876 183L897 175 912 181 925 205 960 250 985 280 1000 300 1026 335 1060 337 1097 342 1136 360 1153 380 1193 397 1217 423 1228 460"/>
<g transform="translate(340,60) scale(.38265,.33333)" fill="none">
<path stroke="#1c1c1c" stroke-width="6" d="M415 140L428 300 445 360 485 455 495 510 520 540 570 525 650 550 700 590 718 625"/>
<path stroke="#1c1c1c" stroke-width="6" d="M735 652L800 655 900 660 960 720 1020 700 1090 650 1105 590 1135 510 1160 492 1240 510"/>
<g stroke="#303030" stroke-width="2.200">
<path d="M390 140L405 250 420 350 470 480 510 545 600 550 680 585 720 640"/>
<path d="M690 655L620 715 550 745 460 815 385 825 355 890 350 1200"/>
<path d="M0 800L50 960 90 1030 120 1030 230 1200"/>
<path d="M740 650L740 890 770 960 890 1015 940 1120 1230 1125 1290 1075"/>
<path d="M1120 1200L1125 1045 1190 910 1250 640 1315 540 1305 300 1310 220 1365 140"/>
<path d="M815 140L790 250 790 400 880 520 880 600 940 690"/>
<path d="M430 400V790L410 820M240 1110H300L345 1080M935 1125L950 1200"/>
</g>
<g fill="#1f1f1f">
<ellipse cx="70" cy="785" rx="14" ry="24"/><ellipse cx="375" cy="452" rx="6" ry="18" transform="rotate(25 375 452)"/><ellipse cx="528" cy="755" rx="24" ry="6" transform="rotate(-30 528 755)"/><ellipse cx="630" cy="400" rx="10" ry="16"/><ellipse cx="315" cy="970" rx="6" ry="34" transform="rotate(-25 315 970)"/><ellipse cx="385" cy="705" rx="16" ry="5" transform="rotate(-30 385 705)"/><ellipse cx="885" cy="1142" rx="42" ry="10" transform="rotate(-12 885 1142)"/><ellipse cx="25" cy="930" rx="12" ry="22"/><ellipse cx="1225" cy="760" rx="7" ry="30" transform="rotate(15 1225 760)"/><ellipse cx="678" cy="480" rx="5" ry="12"/><ellipse cx="492" cy="617" rx="4" ry="7"/><ellipse cx="415" cy="560" rx="3" ry="12"/>
</g>
</g>
<g transform="translate(340,460) scale(.38265,.33333)" fill="none">
<path fill="#1c1c1c" d="M990 510L1040 498 1090 540 1120 575 1180 590 1130 590 1080 575 1050 560 1035 610 1010 680 1000 730 965 800 925 866 885 866 880 820 925 820 965 760 990 680 982 640 930 635 960 610 1000 600 1010 540zM1060 290L1120 270 1130 195 1140 240 1162 260 1140 320 1100 332 1050 320z"/>
<path fill="#1f1f1f" d="M632 250L650 235 658 270 672 290 650 305 628 270zM730 260L750 248 757 280 740 287zM658 525L680 530 690 560 665 550zM850 45L900 40 940 70 935 100 925 70 890 50 860 55zM1395 720L1410 725 1395 745zM1480 695H1500L1490 710z"/>
<path stroke="#1e1e1e" stroke-width="3" d="M0 150L40 190 70 230 130 240 110 300 170 370 230 460 250 480M330 490L460 440 540 490 640 480 760 395 860 430 1000 435"/>
<g stroke="#303030" stroke-width="2.200">
<path d="M75 680L230 540 340 490 530 435 650 405 780 305 890 215 945 90 955 0"/>
<path d="M340 500L460 450 520 440 640 480 760 395 890 405 1000 430 1020 480"/>
<path d="M1020 180L1120 0M1020 180L1015 480M890 190H1020M893 230V405"/>
<path d="M290 865L295 650 250 570 240 520 290 270 265 50 235 0"/>
<path d="M350 0L340 250 330 400M500 570V680L540 790 590 860H700M430 500L500 570"/>
<path d="M0 105L60 180M600 60L540 150 480 240"/>
<path d="M1090 550L1130 575 1230 570 1330 590 1380 650 1430 680 1480 700 1568 740M1430 680V725L1300 800 1280 866M920 520L880 640 840 780 770 866"/>
<path d="M340 385H510L535 430V570H430"/>
</g>
<g stroke="#2d2d2d" stroke-width="1.600">
<path d="M200 398H340M200 430H340M250 340V570M275 340V570M300 270V630M330 270V630M200 398V470L250 470M250 460H340M250 490H340M250 520H340M250 570H330V630H290M360 520H560M580 430V520M630 430H720M760 340V395M840 340V395M940 340V395M760 340H1015M920 250V340M990 250V420M920 250H1120M1045 400V470M990 400H1045"/>
</g>
</g>
<g transform="translate(900,60) scale(.33333)" fill="none">
<path stroke="#1c1c1c" stroke-width="6" d="M290 690L360 790 390 825M580 850L600 880 650 880 710 900 760 960 800 980 880 1010M920 1110L950 1180"/>
<path fill="#1f1f1f" stroke="none" d="M750 450L768 470 785 540 765 580 770 510 748 480zM630 470L655 465 635 500z"/>
<g stroke="#303030" stroke-width="2.200">
<path d="M810 140L800 220 775 320 780 450 760 590 740 660 750 760 820 785 865 825 760 960"/>
</g>
<path stroke="#4e4e4e" stroke-width="2.400" stroke-dasharray="5 3" d="M498 145V1065L525 1078 560 1140 610 1200"/>
</g>
<path stroke="#4e4e4e" stroke-width=".8" stroke-dasharray="5 2 1 2" fill="none" d="M617.500 107L614.500 748"/>
<g transform="translate(900,460) scale(.33333)" fill="none">
<path stroke="#4e4e4e" stroke-width="2.400" stroke-dasharray="5 3" d="M610 0V25L670 100 700 135 730 125 770 170 775 250 800 320 840 310 865 345 865 380 890 390 940 430 925 520 940 550 985 590 990 640 960 675 920 695 900 735 970 770 960 800 990 865"/>
<g stroke="#303030" stroke-width="2.200">
<path d="M0 690L100 740 230 745 380 740 440 770 500 770 590 840 640 865"/>
<path d="M210 665L240 620 300 570 350 510 400 535 500 505 530 535 600 515 710 580 850 640 950 665 1085 690"/>
<path d="M985 0L1085 110"/>
</g>
<path fill="#1c1c1c" d="M900 60L960 50 985 0 968 0 950 45zM1000 90L1085 115 1040 105z"/>
<path fill="#1f1f1f" d="M15 700L30 690 42 700 28 712z"/>
</g>
<text x="497.700" y="171.500" style="font-size:6.500px">Cusick</text><text x="613.600" y="280" style="font-size:8px">Newport</text><text x="674.500" y="279" style="font-size:7.500px">Priest River</text><text x="845" y="193.500" style="font-size:6.500px">Ponderay</text><text x="838" y="214" style="font-size:8px">Sandpoint</text><text x="831" y="263.500" style="font-size:6.500px">Sagle</text><text x="416.500" y="433" style="font-size:7.600px">Deer Park</text><text x="765.500" y="437.200" style="font-size:7px">Athol</text><text x="340" y="360" style="font-size:7px">Loon Lake</text>
<text x="898" y="290" style="font-size:9px;font-style:italic">Lake Pend</text><text x="898" y="302" style="font-size:9px;font-style:italic">Oreille</text>
<text x="954" y="236.500" style="font-size:6.500px">East Hope</text><text x="1008" y="303" style="font-size:8px">Clark Fork</text><text x="1229.700" y="250" style="font-size:7.500px">Snowshoe Peak</text><text x="1230" y="269.500" style="font-style:italic;font-size:7.200px">Cabinet Mountains</text><text x="1230" y="279.200" style="font-style:italic;font-size:7.200px">Wilderness</text><text x="1188" y="405.500" style="font-size:7.500px">Noxon</text>
<text x="475" y="520.800" style="font-size:8px">Colbert</text><text x="443" y="560.500" style="font-size:8px">Fairwood</text><text x="440.600" y="635" style="font-size:9px">Spokane</text><text x="514.500" y="635" style="font-size:9px">Spokane Valley</text><text x="585.700" y="627" style="font-size:7.600px">Liberty Lake</text><text x="363.700" y="642.800">Airway Heights</text><text x="389.700" y="663" style="font-size:8px">GEG</text><text x="370" y="747.500">Cheney</text><text x="656.900" y="598" style="font-size:8px">Post Falls</text><text x="733" y="623.500" style="font-size:9px">Coeur d'Alene</text><text x="723.400" y="702" style="font-size:8.500px;font-style:italic">Lake Coeur</text><text x="723.400" y="714" style="font-size:8.500px;font-style:italic">d'Alene</text><text x="678" y="530" style="font-size:8px">Rathdrum</text>
<text x="980.700" y="714.400">Pinehurst</text><text x="1034" y="715">Kellogg</text><text x="1088.700" y="736.400">Osburn</text><text x="1266" y="512.700">Troy</text>
</svg>
</div>
<div style="left:338px;top:747.500px;width:924px;height:1px;background:#3d3d3d"></div>

<svg class="i" style="left:346.500px;top:78px;width:14px;height:14px;color:#e8e8ea"><use href="#map"/></svg>
<span class="t m" style="left:365px;top:85px;font-size:10.500px;color:#e0e0e2">Dispatch Map</span>
<div style="left:804px;top:76.700px;width:43.500px;height:15.300px;background:#2e2e36;border-radius:4px"></div>
<svg class="i" style="left:808px;top:79.500px;width:10px;height:10px;color:#c8c8cc"><use href="#cal"/></svg>
<span class="t b" style="left:821px;top:84.500px;font-size:7.800px;color:#c8c8cc">Today</span>
<svg class="i" style="left:857px;top:76.500px;width:16px;height:16px;color:#e0e0e2"><use href="#swap"/></svg>
<div style="left:882.500px;top:76.700px;width:32.500px;height:15.300px;background:#17291a;border-radius:8px"></div>
<div style="left:887.700px;top:81.500px;width:5px;height:5px;border-radius:50%;background:#4caf50"></div>
<span class="t" style="left:896px;top:84.800px;font-size:8px;color:#4caf50">Live</span>
<svg class="i" style="left:925px;top:78.500px;width:12px;height:12px;color:#d0d0d4"><use href="#fsx"/></svg>

<!-- Markers -->
<div style="left:827.600px;top:201px;width:20px;height:20px;background:#d6912e;border:1px solid #fff;border-radius:50%"></div>
<svg class="i" style="left:832.100px;top:206px;width:12px;height:12px;color:#fff"><use href="#build"/></svg>
<div style="left:629.400px;top:377px;width:20px;height:20px;background:#22a0b2;border:1px solid #fff;border-radius:50%"></div>
<svg class="i" style="left:634.400px;top:382px;width:12px;height:12px;color:#fff"><use href="#build"/></svg>
<div style="left:679.500px;top:393.700px;width:20px;height:20px;background:#22a0b2;border:1px solid #fff;border-radius:50%"></div>
<svg class="i" style="left:684.500px;top:398.700px;width:12px;height:12px;color:#fff"><use href="#build"/></svg>
<div style="left:681.800px;top:411px;width:20px;height:20px;background:#3f8fd5;border:1px solid #fff;border-radius:50%"></div>
<svg class="i" style="left:686.800px;top:416px;width:12px;height:12px;color:#fff"><use href="#build"/></svg>
<div style="left:672.300px;top:514px;width:20px;height:20px;background:#f44336;border:1px solid #fff;border-radius:50%"></div>
<svg class="i" style="left:677.300px;top:519px;width:12px;height:12px;color:#fff"><use href="#build"/></svg>
<div style="left:719.300px;top:555.700px;width:20px;height:20px;background:#d6912e;border:1px solid #fff;border-radius:50%"></div>
<svg class="i" style="left:724.300px;top:560.700px;width:12px;height:12px;color:#fff"><use href="#build"/></svg>

<!-- Legend -->
<div style="left:343px;top:686px;width:63px;height:57.500px;background:#15151a;border-radius:5px"></div>
<svg class="i" style="left:347.500px;top:691.500px;width:9px;height:9px;color:#c4c4f0"><use href="#acct"/></svg><span class="t" style="left:360px;top:695.800px;font-size:7.200px;color:#d0d0d4">Technician</span>
<svg class="i" style="left:347.500px;top:704px;width:9px;height:9px;color:#2196f3"><use href="#build"/></svg><span class="t" style="left:360px;top:708.300px;font-size:7.200px;color:#d0d0d4">Service Call</span>
<svg class="i" style="left:347.500px;top:716.500px;width:9px;height:9px;color:#4caf50"><use href="#gear"/></svg><span class="t" style="left:360px;top:720.800px;font-size:7.200px;color:#d0d0d4">Maintenance</span>
<svg class="i" style="left:347.500px;top:729px;width:9px;height:9px;color:#ff9800"><use href="#handy"/></svg><span class="t" style="left:360px;top:733.300px;font-size:7.200px;color:#d0d0d4">Repair</span>

<!-- Right panel -->
<div class="sq" style="top:72.300px"></div><svg class="i" style="left:1303.500px;top:77.500px;width:12px;height:12px;color:#c8c8cc"><use href="#work"/></svg>
<span class="t" style="left:1328px;top:81px;font-size:7.800px;color:#a8a8ae">Jobs Completed</span>
<div style="left:1328px;top:88px;width:100px;height:3px;background:#36363c;border-radius:2px"></div>
<span class="t b" style="right:147.500px;top:84px;font-size:10px;color:#eee">0/6</span>
<div class="sq" style="top:104.700px"></div><svg class="i" style="left:1302.500px;top:109px;width:14px;height:14px;color:#c8c8cc"><use href="#money"/></svg>
<span class="t" style="left:1328px;top:116.700px;font-size:7.800px;color:#a8a8ae">Revenue</span>
<span class="t b" style="right:147.500px;top:116.700px;font-size:10px;color:#eee">$0</span>
<div class="sq" style="top:137px"></div><svg class="i" style="left:1302.500px;top:141px;width:14px;height:14px;color:#c8c8cc"><use href="#clock"/></svg>
<span class="t" style="left:1328px;top:149px;font-size:7.800px;color:#a8a8ae">Hours Worked</span>
<span class="t b" style="right:147.500px;top:149px;font-size:10px;color:#eee">0.0h</span>
<div class="sq" style="top:169.500px"></div><svg class="i" style="left:1302.500px;top:173.500px;width:14px;height:14px;color:#c8c8cc"><use href="#speed"/></svg>
<span class="t" style="left:1328px;top:181.500px;font-size:7.800px;color:#a8a8ae">Avg Job Time</span>
<span class="t b" style="right:147.500px;top:181.500px;font-size:10px;color:#eee">0.0h</span>

<svg class="i" style="left:1298px;top:228px;width:13px;height:13px;color:#c4c4f0"><use href="#assign"/></svg>
<span class="t m" style="left:1316px;top:234.700px;font-size:10.300px;color:#e6e6e8">Dispatch Status</span>
<div style="left:1298px;top:248.700px;width:155px;height:28.700px;box-sizing:border-box;background:#4a1e20;border:1px solid #9e2f2f;border-radius:4px"></div>
<svg class="i" style="left:1306px;top:257px;width:11.500px;height:11.500px;color:#f44336"><use href="#poff"/></svg>
<span class="t" style="left:1324px;top:263px;font-size:8.500px;color:#ddd">Unassigned Jobs</span>
<div class="pill" style="top:254.500px;background:#6e2526;color:#ef5350">1</div>
<svg class="i" style="left:1306px;top:291.500px;width:11.500px;height:11.500px;color:#2196f3"><use href="#people"/></svg>
<span class="t" style="left:1324px;top:297.200px;font-size:8.500px;color:#ddd">Techs On Job</span>
<div class="pill" style="top:288px;background:#173049;color:#2196f3">0</div>
<svg class="i" style="left:1306px;top:323px;width:11.500px;height:11.500px;color:#4caf50"><use href="#checko"/></svg>
<span class="t" style="left:1324px;top:328.500px;font-size:8.500px;color:#ddd">Techs Available</span>
<div class="pill" style="top:319.500px;background:#1e3520;color:#4caf50">0</div>
<svg class="i" style="left:1306px;top:354px;width:11.500px;height:11.500px;color:#ff9800"><use href="#car"/></svg>
<span class="t" style="left:1324px;top:359.500px;font-size:8.500px;color:#ddd">Techs En Route</span>
<div class="pill" style="top:350.700px;background:#44321a;color:#ff9800">0</div>

<svg class="i" style="left:1298px;top:410px;width:13px;height:13px;color:#c8c8a0"><use href="#bell"/></svg>
<span class="t m" style="left:1316px;top:416.700px;font-size:10.300px;color:#e6e6e8">Alerts</span>
<div class="badge" style="top:408.700px">2</div>
<div style="left:1298px;top:427px;width:155px;height:1.500px;background:#2f2f35"></div>
<div style="left:1298px;top:438.500px;width:21.300px;height:21.200px;background:#3d2e1a;border-radius:5px"></div>
<svg class="i" style="left:1302.500px;top:443px;width:12px;height:12px;color:#ff9800"><use href="#warn"/></svg>
<span class="t b" style="left:1327px;top:444.700px;font-size:8.200px;color:#e8e8ea">5 jobs running behind</span>
<span class="t" style="left:1327px;top:454.700px;font-size:7.100px;color:#aaa">Unknown Customer, Unknown Cust...</span>
<svg class="i" style="left:1443px;top:443px;width:12px;height:12px;color:#c8c8cc"><use href="#right"/></svg>
<div style="left:1298px;top:470.500px;width:21.300px;height:21px;background:#3d1e20;border-radius:5px"></div>
<svg class="i" style="left:1303px;top:475.500px;width:11px;height:11px;color:#f44336"><use href="#poff"/></svg>
<span class="t b" style="left:1327px;top:476.700px;font-size:8.200px;color:#e8e8ea">1 job need assignment</span>
<span class="t" style="left:1327px;top:486.700px;font-size:7.100px;color:#aaa">Unknown Customer</span>
<svg class="i" style="left:1443px;top:475px;width:12px;height:12px;color:#c8c8cc"><use href="#right"/></svg>

<svg class="i" style="left:1298px;top:533px;width:13px;height:13px;color:#f44336"><use href="#poff"/></svg>
<span class="t m" style="left:1316px;top:539.700px;font-size:10.300px;color:#e6e6e8">Unassigned Jobs</span>
<div class="badge" style="top:532px">1</div>
<div style="left:1298px;top:551px;width:155px;height:1.500px;background:#2f2f35"></div>
<div style="left:1303.700px;top:561.700px;width:32.300px;height:23.300px;box-sizing:border-box;background:#3b1b1e;border:1px solid #6b2a2a;border-radius:3px"></div>
<span class="t b" style="left:1320px;top:570px;font-size:6.200px;color:#c33;transform:translate(-50%,-50%)">Today</span>
<span class="t" style="left:1320px;top:577.500px;font-size:6px;color:#a33;transform:translate(-50%,-50%)">5:30 PM</span>
<span class="t b" style="left:1342.700px;top:569px;font-size:8px;color:#e8e8ea">Unknown Customer</span>
<span class="t" style="left:1342.700px;top:579px;font-size:7.200px;color:#aaa">123 Main st Rathdrum ID</span>
<svg class="i" style="left:1435px;top:567px;width:12px;height:12px;color:#c8c8cc"><use href="#right"/></svg>

<!-- Right sidebar -->
<span class="t b" style="left:1485px;top:35px;font-size:6.800px;color:#b0b0b6;letter-spacing:.7px">ROLES</span>
<svg class="i" style="left:1487.500px;top:49.500px;width:13px;height:13px;color:#aaaab0"><use href="#trend"/></svg><span class="t r" style="left:1507.500px;top:56px">Sales</span><svg class="i" style="left:1576px;top:50px;width:12px;height:12px;color:#c0c0c4"><use href="#more"/></svg>
<svg class="i" style="left:1487.500px;top:77px;width:13px;height:13px;color:#aaaab0"><use href="#ware"/></svg><span class="t r" style="left:1507.500px;top:83.500px">Warehouse</span><svg class="i" style="left:1576px;top:77.500px;width:12px;height:12px;color:#c0c0c4"><use href="#more"/></svg>
<svg class="i" style="left:1487.500px;top:104px;width:13px;height:13px;color:#aaaab0"><use href="#people"/></svg><span class="t r" style="left:1507.500px;top:111px">HR</span><svg class="i" style="left:1576px;top:104.500px;width:12px;height:12px;color:#c0c0c4"><use href="#more"/></svg>
<svg class="i" style="left:1487.500px;top:132px;width:13px;height:13px;color:#aaaab0"><use href="#bank"/></svg><span class="t r" style="left:1507.500px;top:138.500px">Accounting</span><svg class="i" style="left:1576px;top:132.500px;width:12px;height:12px;color:#c0c0c4"><use href="#more"/></svg>
<div style="left:1475px;top:156px;width:125px;height:1px;background:#3c3c42"></div>
<span class="t b" style="left:1485px;top:172.500px;font-size:6.800px;color:#b0b0b6;letter-spacing:.7px">ADMIN</span>
<svg class="i" style="left:1487.500px;top:187px;width:13px;height:13px;color:#aaaab0"><use href="#biz"/></svg><span class="t r" style="left:1507.500px;top:193.500px">Company Settings</span>
<svg class="i" style="left:1487.500px;top:214.500px;width:13px;height:13px;color:#aaaab0"><use href="#people"/></svg><span class="t r" style="left:1507.500px;top:221px">User Management</span>
<svg class="i" style="left:1487.500px;top:242px;width:13px;height:13px;color:#aaaab0"><use href="#shield"/></svg><span class="t r" style="left:1507.500px;top:248.500px">Role Permissions</span>
<svg class="i" style="left:1487.500px;top:269.500px;width:13px;height:13px;color:#aaaab0"><use href="#doco"/></svg><span class="t r" style="left:1507.500px;top:276px">Templates</span>
<svg class="i" style="left:1487.500px;top:297px;width:13px;height:13px;color:#aaaab0"><use href="#pal"/></svg><span class="t r" style="left:1507.500px;top:303.500px">Branding</span>
<svg class="i" style="left:1487.500px;top:324px;width:13px;height:13px;color:#aaaab0"><use href="#build"/></svg><span class="t r" style="left:1507.500px;top:331px">Service Pricebook</span>
<svg class="i" style="left:1487.500px;top:351.500px;width:13px;height:13px;color:#aaaab0"><use href="#money"/></svg><span class="t r" style="left:1507.500px;top:358.500px">Sales Pricebook</span>
<svg class="i" style="left:1487.500px;top:379px;width:13px;height:13px;color:#aaaab0"><use href="#pay"/></svg><span class="t r" style="left:1507.500px;top:386px">Payroll</span>
<svg class="i" style="left:1487.500px;top:406.500px;width:13px;height:13px;color:#aaaab0"><use href="#dev"/></svg><span class="t r" style="left:1507.500px;top:413.200px">Active Sessions</span>
<div style="left:1475px;top:436.500px;width:125px;height:1px;background:#3c3c42"></div>
<svg class="i" style="left:1487.500px;top:454.500px;width:13px;height:13px;color:#b4b4ba"><use href="#gear"/></svg><span class="t r" style="left:1507.500px;top:461px">Settings</span><svg class="i" style="left:1576px;top:455px;width:12px;height:12px;color:#c0c0c4"><use href="#more"/></svg>
<svg class="i" style="left:1487.500px;top:485.500px;width:13px;height:13px;color:#a8a882"><use href="#out"/></svg><span class="t r" style="left:1507.500px;top:492.200px;color:#a8a882">Sign Out</span>

<!-- FAB / synced -->
<div style="left:1387.500px;top:790px;width:77px;height:35px;border-radius:11px;background:#403f68;box-shadow:0 2px 5px rgba(0,0,0,.4)"></div>
<svg class="i" style="left:1398.500px;top:801px;width:13px;height:13px;color:#fff"><use href="#add"/></svg>
<span class="t b" style="left:1418px;top:808px;font-size:8.800px;color:#eeeef6">New Job</span>
<svg class="i" style="left:1507px;top:807.500px;width:15px;height:15px;color:#c4c4f0"><use href="#cloud"/></svg>
<span class="t" style="left:1527px;top:815.500px;font-size:9px;color:#b8b8be">All synced</span>

<!-- Bottom nav -->
<div style="left:0;top:835px;width:1600px;height:35px;background:#33333a;border-top:1px solid #424248;box-sizing:border-box"></div>
<svg style="position:absolute;left:126px;top:839px" width="14" height="16" viewBox="0 0 14 16"><circle cx="7" cy="9" r="6" fill="#2a8cc0"/><rect x="5" y="1" width="4" height="1.600" fill="#2a8cc0"/><path d="M1.500 1.500L12.500 15" stroke="#33333a" stroke-width="1.600"/></svg>
<span class="t nav" style="left:133px;top:862.500px;color:#2a8cc0">Clock Out</span>
<svg class="i" style="left:393px;top:840px;width:14px;height:14px;color:#c4c4c8"><use href="#dasho"/></svg>
<span class="t nav" style="left:400px;top:862.500px">Dashboard</span>
<svg class="i" style="left:660px;top:840px;width:14px;height:14px;color:#c4c4c8"><use href="#bag"/></svg>
<span class="t nav" style="left:667px;top:862.500px">Jobs</span>
<svg class="i" style="left:925.500px;top:839.500px;width:15px;height:15px;color:#c4c4c8"><use href="#pplo"/></svg>
<span class="t nav" style="left:933px;top:862.500px">Customers</span>
<svg class="i" style="left:1193px;top:840px;width:14px;height:14px;color:#c4c4c8"><use href="#cal"/></svg>
<span class="t nav" style="left:1200px;top:862.500px">Schedule</span>
<svg style="position:absolute;left:1459.500px;top:839.500px;color:#c4c4c8" width="15" height="15" viewBox="0 0 24 24"><use href="#gear" fill="none" stroke="#c4c4c8" stroke-width="2"/></svg>
<span class="t nav" style="left:1467px;top:862.500px">Settings</span>
</body></html>
